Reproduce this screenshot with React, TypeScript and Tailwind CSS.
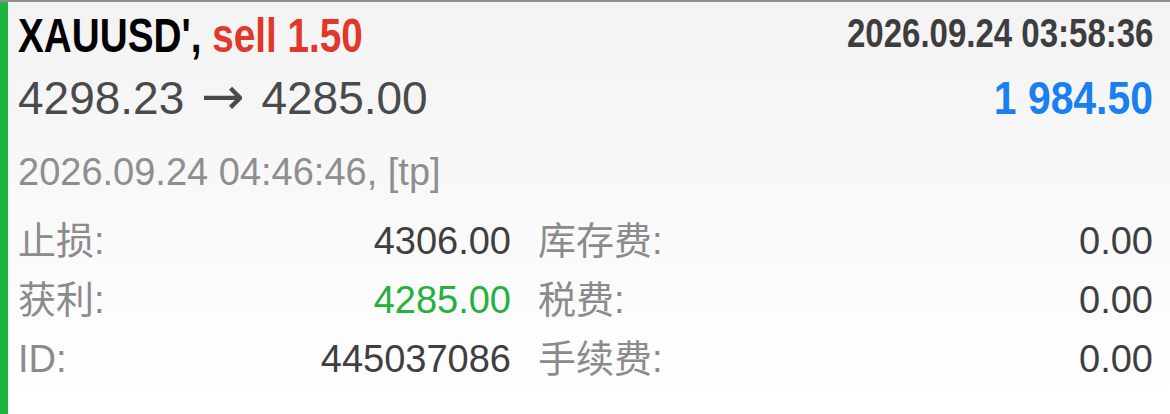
import React from "react";

const rows = [
  { l: "止损:", v: "4306.00", vc: "text-[#3f3f41]", r: "库存费:", rv: "0.00" },
  { l: "获利:", v: "4285.00", vc: "text-[#26b03c]", r: "税费:", rv: "0.00" },
  { l: "ID:", v: "445037086", vc: "text-[#3f3f41]", r: "手续费:", rv: "0.00" },
];

export default function App() {
  return (
    <div className="w-[1170px] h-[414px] flex border-t-2 border-[#8f8f8f] bg-linear-to-b from-[#f3f3f3] to-white font-['Liberation_Sans','Noto_Sans_CJK_SC',sans-serif] overflow-hidden">
      {/* green side bar */}
      <div className="w-2 bg-[#1db53b] shrink-0" />

      <div className="flex-1 pl-[10px] pr-[17px] pt-[9px]">
        {/* symbol + open time */}
        <div className="flex justify-between items-start h-[48px]">
          <span className="inline-block origin-left scale-x-[0.79] whitespace-nowrap text-[49px] leading-[48px] font-bold text-black">
            XAUUSD', <span className="text-[#e0392b]">sell 1.50</span>
          </span>
          <span className="inline-block mt-[2px] origin-right scale-x-[0.825] whitespace-nowrap text-[40px] leading-[40px] font-bold text-[#3d3d40]">
            2026.09.24 03:58:36
          </span>
        </div>

        {/* prices + profit */}
        <div className="flex justify-between items-start mt-[16px] h-[46px]">
          <span className="text-[46px] leading-[46px] text-[#4a4a4c] whitespace-nowrap">
            4298.23 <span className="mx-[4px] font-['DejaVu_Sans'] text-[52px] leading-[36px]">→</span> 4285.00
          </span>
          <span className="inline-block origin-right scale-x-[0.87] whitespace-nowrap text-[47px] leading-[46px] font-bold text-[#1a7fef]">
            1 984.50
          </span>
        </div>

        {/* close time */}
        <div className="mt-[22px] text-[38px] leading-[59px] text-[#8e8e90] whitespace-nowrap">
          2026.09.24 04:46:46, [tp]
        </div>

        {/* details */}
        <div className="mt-[10px] grid grid-cols-[493px_1fr] gap-x-[27px] text-[38px] leading-[59px]">
          {rows.map((row) => (
            <React.Fragment key={row.l}>
              <div className="flex justify-between">
                <span className="text-[#8b8b8d]">{row.l}</span>
                <span className={row.vc}>{row.v}</span>
              </div>
              <div className="flex justify-between">
                <span className="text-[#8b8b8d]">{row.r}</span>
                <span className="text-[#3f3f41]">{row.rv}</span>
              </div>
            </React.Fragment>
          ))}
        </div>
      </div>
    </div>
  );
}
